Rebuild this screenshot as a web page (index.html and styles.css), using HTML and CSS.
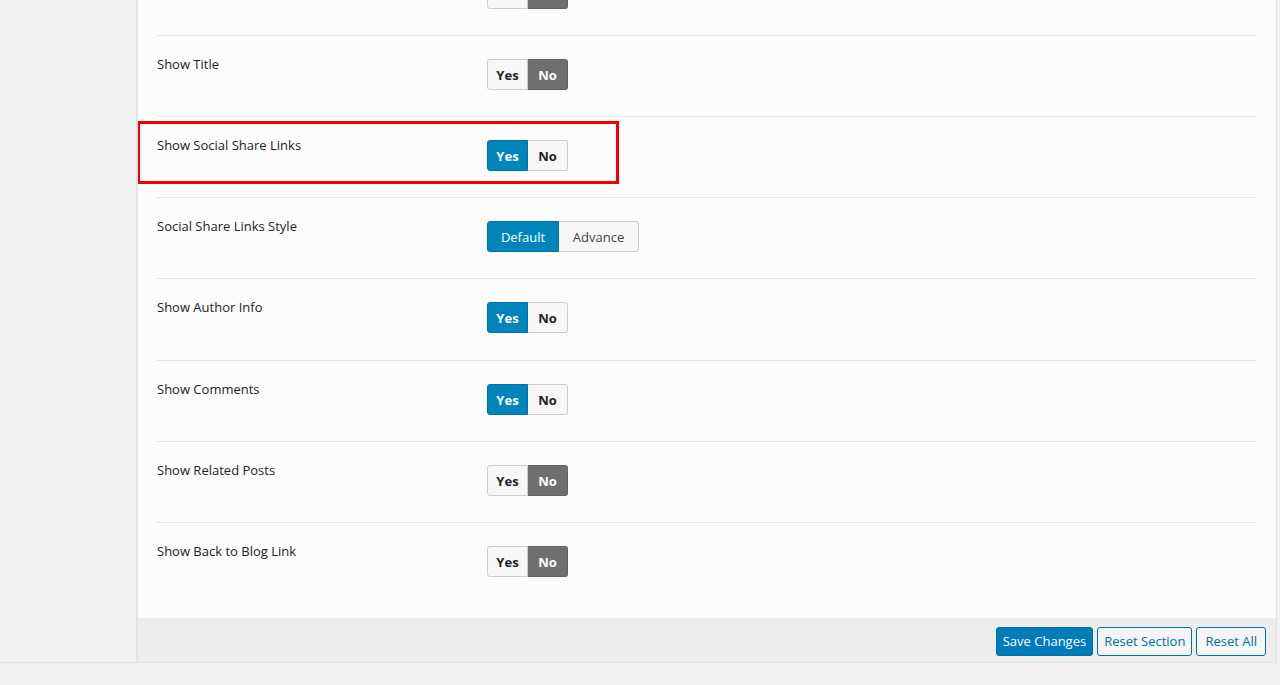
FILE: index.html
```html
<!DOCTYPE html>
<html lang="en">
<head>
  <meta charset="UTF-8">
  <meta name="viewport" content="width=device-width, initial-scale=1.0">
  <title>Blog Options</title>
  <link rel="stylesheet" href="styles.css">
</head>
<body>
  <div class="wrap">
    <div class="sidebar"></div>

    <div class="panel">
      <div class="options">
        <div class="option-row">
          <div class="option-label">Show Date</div>
          <div class="button-set">
            <span class="toggle">Yes</span><span class="toggle off">No</span>
          </div>
        </div>

        <div class="option-row">
          <div class="option-label">Show Title</div>
          <div class="button-set">
            <span class="toggle">Yes</span><span class="toggle off">No</span>
          </div>
        </div>

        <div class="option-row">
          <div class="highlight"></div>
          <div class="option-label">Show Social Share Links</div>
          <div class="button-set">
            <span class="toggle on">Yes</span><span class="toggle">No</span>
          </div>
        </div>

        <div class="option-row">
          <div class="option-label">Social Share Links Style</div>
          <div class="button-set wide">
            <span class="toggle on">Default</span><span class="toggle">Advance</span>
          </div>
        </div>

        <div class="option-row">
          <div class="option-label">Show Author Info</div>
          <div class="button-set">
            <span class="toggle on">Yes</span><span class="toggle">No</span>
          </div>
        </div>

        <div class="option-row">
          <div class="option-label">Show Comments</div>
          <div class="button-set">
            <span class="toggle on">Yes</span><span class="toggle">No</span>
          </div>
        </div>

        <div class="option-row">
          <div class="option-label">Show Related Posts</div>
          <div class="button-set">
            <span class="toggle">Yes</span><span class="toggle off">No</span>
          </div>
        </div>

        <div class="option-row">
          <div class="option-label">Show Back to Blog Link</div>
          <div class="button-set">
            <span class="toggle">Yes</span><span class="toggle off">No</span>
          </div>
        </div>
      </div>

      <div class="footer">
        <button class="btn primary">Save Changes</button>
        <button class="btn secondary">Reset Section</button>
        <button class="btn secondary">Reset All</button>
      </div>
    </div>
  </div>
</body>
</html>
```

FILE: styles.css
```css
body {
  margin: 0;
  background-color: #f1f1f1;
  font-family: "Open Sans", "Liberation Sans", sans-serif;
  font-size: 13px;
  color: #23282d;
  height: 685px;
  overflow: hidden;
}
.wrap {
  display: flex;
  align-items: flex-start;
}
.sidebar {
  width: 136px;
  height: 662px;
  background-color: #f3f3f3;
  border-right: 2px solid #e4e4e4;
  border-bottom: 1px solid #e2e2e2;
}
.panel {
  width: 1138px;
  height: 662px;
  background-color: #fcfcfc;
  border-right: 1px solid #e2e2e2;
  border-bottom: 1px solid #e2e2e2;
  display: flex;
  flex-direction: column;
  overflow: hidden;
}
/* list is scrolled: the top row shows only its lower part */
.options {
  flex: 1;
  padding: 0 20px 0 19px;
  margin-top: -45px;
}
.option-row {
  position: relative;
  display: flex;
  height: 80px;
  border-bottom: 1px solid #e4e4e4;
}
.option-row:nth-child(5) {
  height: 81px;
}
.option-row:last-child {
  border-bottom: none;
}
.option-label {
  width: 330px;
  padding-top: 19px;
  font-weight: 400;
  color: #1e2226;
  line-height: 18px;
}
.button-set {
  display: flex;
  margin-top: 23px;
  height: 31px;
}
.toggle {
  display: flex;
  align-items: center;
  justify-content: center;
  width: 39px;
  font-weight: 700;
  color: #222;
  background-color: #f7f7f7;
  border: 1px solid #cccccc;
  box-sizing: border-box;
}
.toggle:first-child {
  width: 41px;
  border-radius: 3px 0 0 3px;
}
.toggle:last-child {
  width: 40px;
  border-left: none;
  border-radius: 0 3px 3px 0;
}
.toggle.on {
  background-color: #0085ba;
  border-color: #0073aa;
  color: #fff;
}
.toggle.off {
  background-color: #6f6f6f;
  border-color: #626262;
  color: #fff;
}
.button-set.wide .toggle {
  font-weight: 400;
}
.button-set.wide .toggle:first-child {
  width: 72px;
}
.button-set.wide .toggle:last-child {
  width: 80px;
  color: #444;
}
.highlight {
  position: absolute;
  left: -20px;
  top: 4px;
  width: 476px;
  height: 57px;
  border: 3px solid #f20000;
  pointer-events: none;
}
.footer {
  height: 44px;
  background-color: #ededed;
  display: flex;
  justify-content: flex-end;
  align-items: center;
  gap: 4px;
  padding-right: 10px;
}
.btn {
  font-family: inherit;
  font-size: 13px;
  height: 29px;
  padding: 0 6px;
  margin-top: 2px;
  border-radius: 3px;
  border: 1px solid #0071a1;
  cursor: pointer;
}
.btn.primary {
  background-color: #007cba;
  color: #fff;
}
.btn.secondary {
  background-color: #f3f5f6;
  color: #0071a1;
}
.btn.secondary:last-child {
  padding: 0 8px;
}
```
